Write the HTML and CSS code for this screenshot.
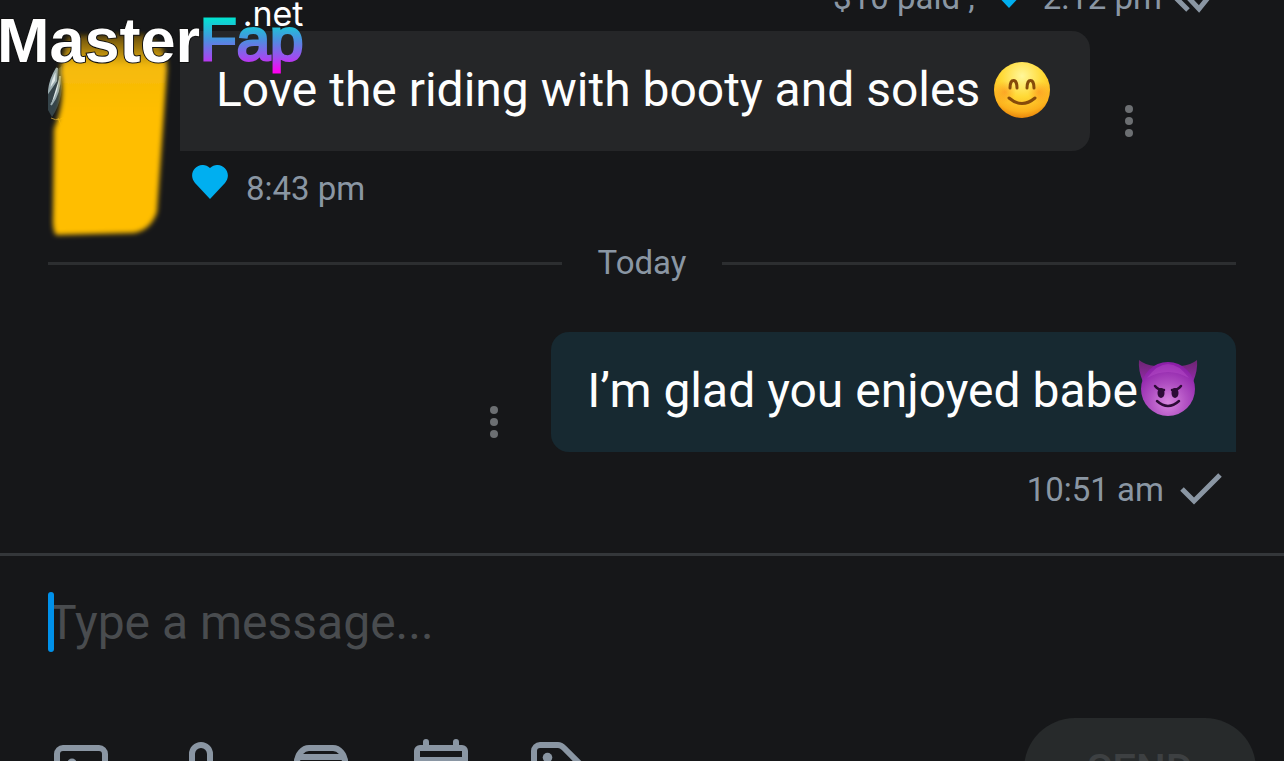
FILE: index.html
```html
<!DOCTYPE html>
<html lang="en">
<head>
    <meta charset="utf-8" />
    <title>Messages</title>
    <link rel="stylesheet" href="styles.css">
</head>
<body>

    <!-- Site logo, lies over the chat -->
    <div class="logo">
        <span class="logo-master">Master</span><span class="logo-fap">Fap</span>
        <span class="logo-net">.net</span>
    </div>

    <main class="chat">
        <div class="meta meta-out meta-first">
            <span>$10 paid ,</span>
            <svg class="heart" viewBox="0 0 36 34"><path d="M18 34 3 18C-6 7 8-6 18 3 28-6 42 7 33 18Z" /></svg>
            <span>2:12 pm</span>
            <svg class="check" viewBox="0 0 42 32"><path d="M2 17 14 29 M11 13 25 28 41 8" /></svg>
        </div>

        <section class="message">
            <svg class="avatar" viewBox="0 0 132 210">
                <defs>
                    <filter id="soft" x="-20%" y="-20%" width="140%" height="140%"><feGaussianBlur stdDeviation="2.5" /></filter>
                    <linearGradient id="fade" x2="0" y2="1">
                        <stop offset="0" stop-color="#5d4607" />
                        <stop offset=".16" stop-color="#f5ba0a" />
                        <stop offset=".4" stop-color="#ffbe00" />
                        <stop offset="1" stop-color="#ffbe00" />
                    </linearGradient>
                </defs>
                <path d="M14 35Q2 42 0 61V79L4 86Q17 67 14 35Z" fill="#35444a" />
                <path d="M9 37Q2 48 1 60L8 50ZM12 45Q12 62 3 74" fill="#dfe8e8" stroke="#9badb0" stroke-width="2" />
                <path d="M3 87Q12 92 19 83M10 87 17 103" fill="none" stroke="#a98a35" />
                <path d="M20 5 93 3Q119 10 119 38L109 181Q103 199 86 202L8 204Q4 199 5 183L6 98Q18 70 12 40Z" fill="url(#fade)" filter="url(#soft)" />
            </svg>
            <div class="message-body">
                <div class="bubble-row">
                    <p class="bubble bubble-in">Love the riding with booty and soles
                        <svg class="emoji" viewBox="0 0 60 60" role="img" aria-label="smiling face">
                            <defs>
                                <radialGradient id="smile" cx=".5" cy=".25" r=".75">
                                    <stop offset="0" stop-color="#fff79a" />
                                    <stop offset=".5" stop-color="#ffd935" />
                                    <stop offset=".85" stop-color="#fcb01c" />
                                    <stop offset="1" stop-color="#e8860c" />
                                </radialGradient>
                                <radialGradient id="cheek">
                                    <stop offset="0" stop-color="#fb7a1a" stop-opacity=".5" />
                                    <stop offset="1" stop-color="#fb7a1a" stop-opacity="0" />
                                </radialGradient>
                            </defs>
                            <circle cx="30" cy="30" r="28" fill="url(#smile)" />
                            <circle cx="13" cy="32" r="11" fill="url(#cheek)" />
                            <circle cx="47" cy="32" r="11" fill="url(#cheek)" />
                            <path d="M18 28C18 18 25 18 25 28M35 28C35 18 42 18 42 28" fill="none" stroke="#864b0a" stroke-width="3" stroke-linecap="round" />
                            <path d="M17 38Q30 49 43 38" fill="none" stroke="#864b0a" stroke-width="3" stroke-linecap="round" />
                        </svg>
                    </p>
                    <button class="dots" type="button" aria-label="Message options">
                        <svg viewBox="0 0 8 32"><circle cx="4" cy="4" r="4" /><circle cx="4" cy="16" r="4" /><circle cx="4" cy="28" r="4" /></svg>
                    </button>
                </div>
                <div class="meta">
                    <svg class="heart" viewBox="0 0 36 34"><path d="M18 34 3 18C-6 7 8-6 18 3 28-6 42 7 33 18Z" /></svg>
                    <span>8:43 pm</span>
                </div>
            </div>
        </section>

        <div class="divider">Today</div>

        <section class="message message-out">
            <div class="message-body">
                <div class="bubble-row bubble-row-out">
                    <button class="dots" type="button" aria-label="Message options">
                        <svg viewBox="0 0 8 32"><circle cx="4" cy="4" r="4" /><circle cx="4" cy="16" r="4" /><circle cx="4" cy="28" r="4" /></svg>
                    </button>
                    <p class="bubble bubble-out">I’m glad you enjoyed babe<svg class="emoji" viewBox="0 3 60 60" role="img" aria-label="smiling face with horns">
                            <defs>
                                <linearGradient id="horn" x2="0" y2="1">
                                    <stop offset="0" stop-color="#6b2470" />
                                    <stop offset="1" stop-color="#942baa" />
                                </linearGradient>
                                <radialGradient id="devil" cx=".5" cy=".75" r=".7">
                                    <stop offset="0" stop-color="#d887df" />
                                    <stop offset=".5" stop-color="#b04fc2" />
                                    <stop offset="1" stop-color="#8c1fa8" />
                                </radialGradient>
                            </defs>
                            <path d="M1 2Q7 7 17 8L5 24Q0 12 1 2ZM59 2Q53 7 43 8L55 24Q60 12 59 2Z" fill="url(#horn)" />
                            <circle cx="30" cy="31" r="27" fill="url(#devil)" />
                            <path d="M9 20Q30-8 51 20Q30 8 9 20Z" fill="#bb52cc" opacity=".4" />
                            <ellipse cx="23" cy="35" rx="3.500" ry="5" fill="#2d0b36" />
                            <ellipse cx="37" cy="35" rx="3.500" ry="5" fill="#2d0b36" />
                            <path d="M17 28Q20 32 26 32M43 28Q40 32 34 32M19 43Q30 53 41 43" fill="none" stroke="#2d0b36" stroke-width="2.500" stroke-linecap="round" />
                        </svg></p>
                </div>
                <div class="meta meta-out">
                    <span>10:51 am</span>
                    <svg class="check" viewBox="0 0 42 32"><path d="M2 16 14 28 40 2" /></svg>
                </div>
            </div>
        </section>
    </main>

    <form class="composer">
        <label class="field">
            <span class="caret"></span>
            <input class="field-input" type="text" placeholder="Type a message..." aria-label="Message">
        </label>
        <div class="toolbar">
            <button class="tool" type="button" aria-label="Add image">
                <svg viewBox="0 0 24 24"><rect x="4" y="4" width="16" height="16" rx="2" /><path d="m5 19 9-8 6 6" /><circle class="fill" cx="9" cy="9" r="1.500" /></svg>
            </button>
            <button class="tool" type="button" aria-label="Record voice">
                <svg viewBox="0 0 24 24"><rect x="9" y="3" width="6" height="12" rx="3" /><path d="M5 11a7 7 0 0 0 14 0M12 18v4" /></svg>
            </button>
            <button class="tool" type="button" aria-label="Open vault">
                <svg viewBox="0 0 24 24"><path d="M4 9C4 6 6 4 8 4h8c2 0 4 2 4 5M5 7h14M4 8v12h16V8M9 12h6" /></svg>
            </button>
            <button class="tool" type="button" aria-label="Schedule">
                <svg viewBox="0 0 24 24"><rect x="4" y="4" width="16" height="17" rx="1" /><path d="M7 2v2M17 2v2M4 8h16" /></svg>
            </button>
            <button class="tool" type="button" aria-label="Set price">
                <svg viewBox="0 0 24 24"><path d="M3 12V5a2 2 0 0 1 2-2h6q1 0 2 1l8 8-9 9z" /><circle class="fill" cx="7.500" cy="7.200" r="1.600" /></svg>
            </button>
            <button class="send" type="submit">SEND</button>
        </div>
    </form>

</body>
</html>
```
FILE: styles.css
```css
:root {
    --bg: #161719;
    --muted: #8a96a3;
    --line: #2c2e30;
    --blue: #00aff0;
}

* {
    box-sizing: border-box;
}

body {
    margin: 0;
    height: 100vh;
    overflow: hidden;
    display: flex;
    flex-direction: column;
    background: var(--bg);
    color: #fefefe;
    font-family: Roboto, sans-serif;
    font-size: 48px;
}

button {
    padding: 0;
    border: 0;
    background: none;
}

svg {
    display: block;
}

/* Logo */
.logo {
    position: absolute;
    left: -3px;
    top: 0;
    z-index: 1;
    display: flex;
    font: 60px/80px "Liberation Sans", sans-serif;
}

.logo-master {
    font-size: 63px;
    font-weight: bold;
    color: #fff;
    -webkit-text-stroke: 2px #111;
    paint-order: stroke fill;
}

.logo-fap {
    background: linear-gradient(#00e5d0 22%, #4b8fe0 50%, #a04cf0 72%, #ff00f0 90%);
    -webkit-background-clip: text;
    background-clip: text;
    -webkit-text-stroke: 3px transparent;
    color: transparent;
}

.logo-net {
    position: absolute;
    right: 0;
    top: 0;
    font: 34px/28px Inter, sans-serif;
}

/* Messages */
.chat {
    padding: 0 48px;
}

.message {
    display: flex;
}

.message-out {
    justify-content: flex-end;
    margin-top: 47px;
}

.avatar {
    width: 132px;
    height: 210px;
    flex: none;
}

.bubble-row {
    display: flex;
    align-items: flex-end;
    gap: 15px;
}

.bubble-row-out {
    gap: 33px;
}

.bubble {
    margin: 0;
    padding: 29px 38px 31px 36px;
    line-height: 60px;
    border-radius: 18px;
}

.bubble-in {
    background: #252628;
    border-bottom-left-radius: 0;
}

.bubble-out {
    background: #172931;
    border-bottom-right-radius: 0;
}

.emoji {
    display: inline-block;
    width: 60px;
    height: 60px;
    vertical-align: -14px;
    overflow: visible;
}

.dots {
    width: 48px;
    height: 60px;
}

.dots svg {
    width: 8px;
    height: 32px;
    margin: 0 auto;
    fill: #6c6f72;
}

.meta {
    display: flex;
    align-items: center;
    gap: 18px;
    height: 40px;
    margin-top: 17px;
    padding: 0 12px;
    font-size: 33px;
    color: var(--muted);
}

.meta-out {
    justify-content: flex-end;
    gap: 16px;
    padding: 0 14px;
}

/* The previous message is scrolled out of view */
.meta-first {
    margin: -23px 0 14px;
    padding-right: 20px;
}

.meta-first .check {
    margin-left: -4px;
}

.heart {
    width: 36px;
    height: 34px;
    margin-bottom: 12px;
    fill: var(--blue);
}

.check {
    width: 42px;
    height: 32px;
    fill: none;
    stroke: var(--muted);
    stroke-width: 5;
}

.divider {
    display: flex;
    align-items: center;
    gap: 36px;
    font-size: 33px;
    line-height: 44px;
    color: var(--muted);
}

.divider::before,
.divider::after {
    content: "";
    flex: 1;
    height: 3px;
    background: var(--line);
}

/* Composer */
.composer {
    margin-top: 44px;
    padding: 36px 28px 36px 48px;
    border-top: 3px solid #34373a;
}

.field {
    display: flex;
}

.caret {
    z-index: 1;
    width: 6px;
    height: 60px;
    margin-right: -6px;
    border-radius: 3px;
    background: #0091ea;
}

.field-input {
    flex: 1;
    min-width: 0;
    height: 60px;
    padding: 0;
    border: 0;
    outline: 0;
    background: none;
    color: inherit;
    font: inherit;
}

.field-input::placeholder {
    color: #494c4f;
}

.toolbar {
    display: flex;
    align-items: flex-start;
    gap: 48px;
    margin: 66px 0 0 -3px;
}

.tool {
    margin-top: 18px;
}

.tool svg {
    width: 72px;
    height: 72px;
    fill: none;
    stroke: var(--muted);
    stroke-width: 2;
    stroke-linecap: round;
    stroke-linejoin: round;
}

.tool .fill {
    fill: var(--muted);
    stroke: none;
}

.send {
    width: 232px;
    height: 102px;
    margin-left: auto;
    border-radius: 51px;
    background: #272a2b;
    color: #3d4042;
    font: 500 42px Roboto, sans-serif;
}
```
